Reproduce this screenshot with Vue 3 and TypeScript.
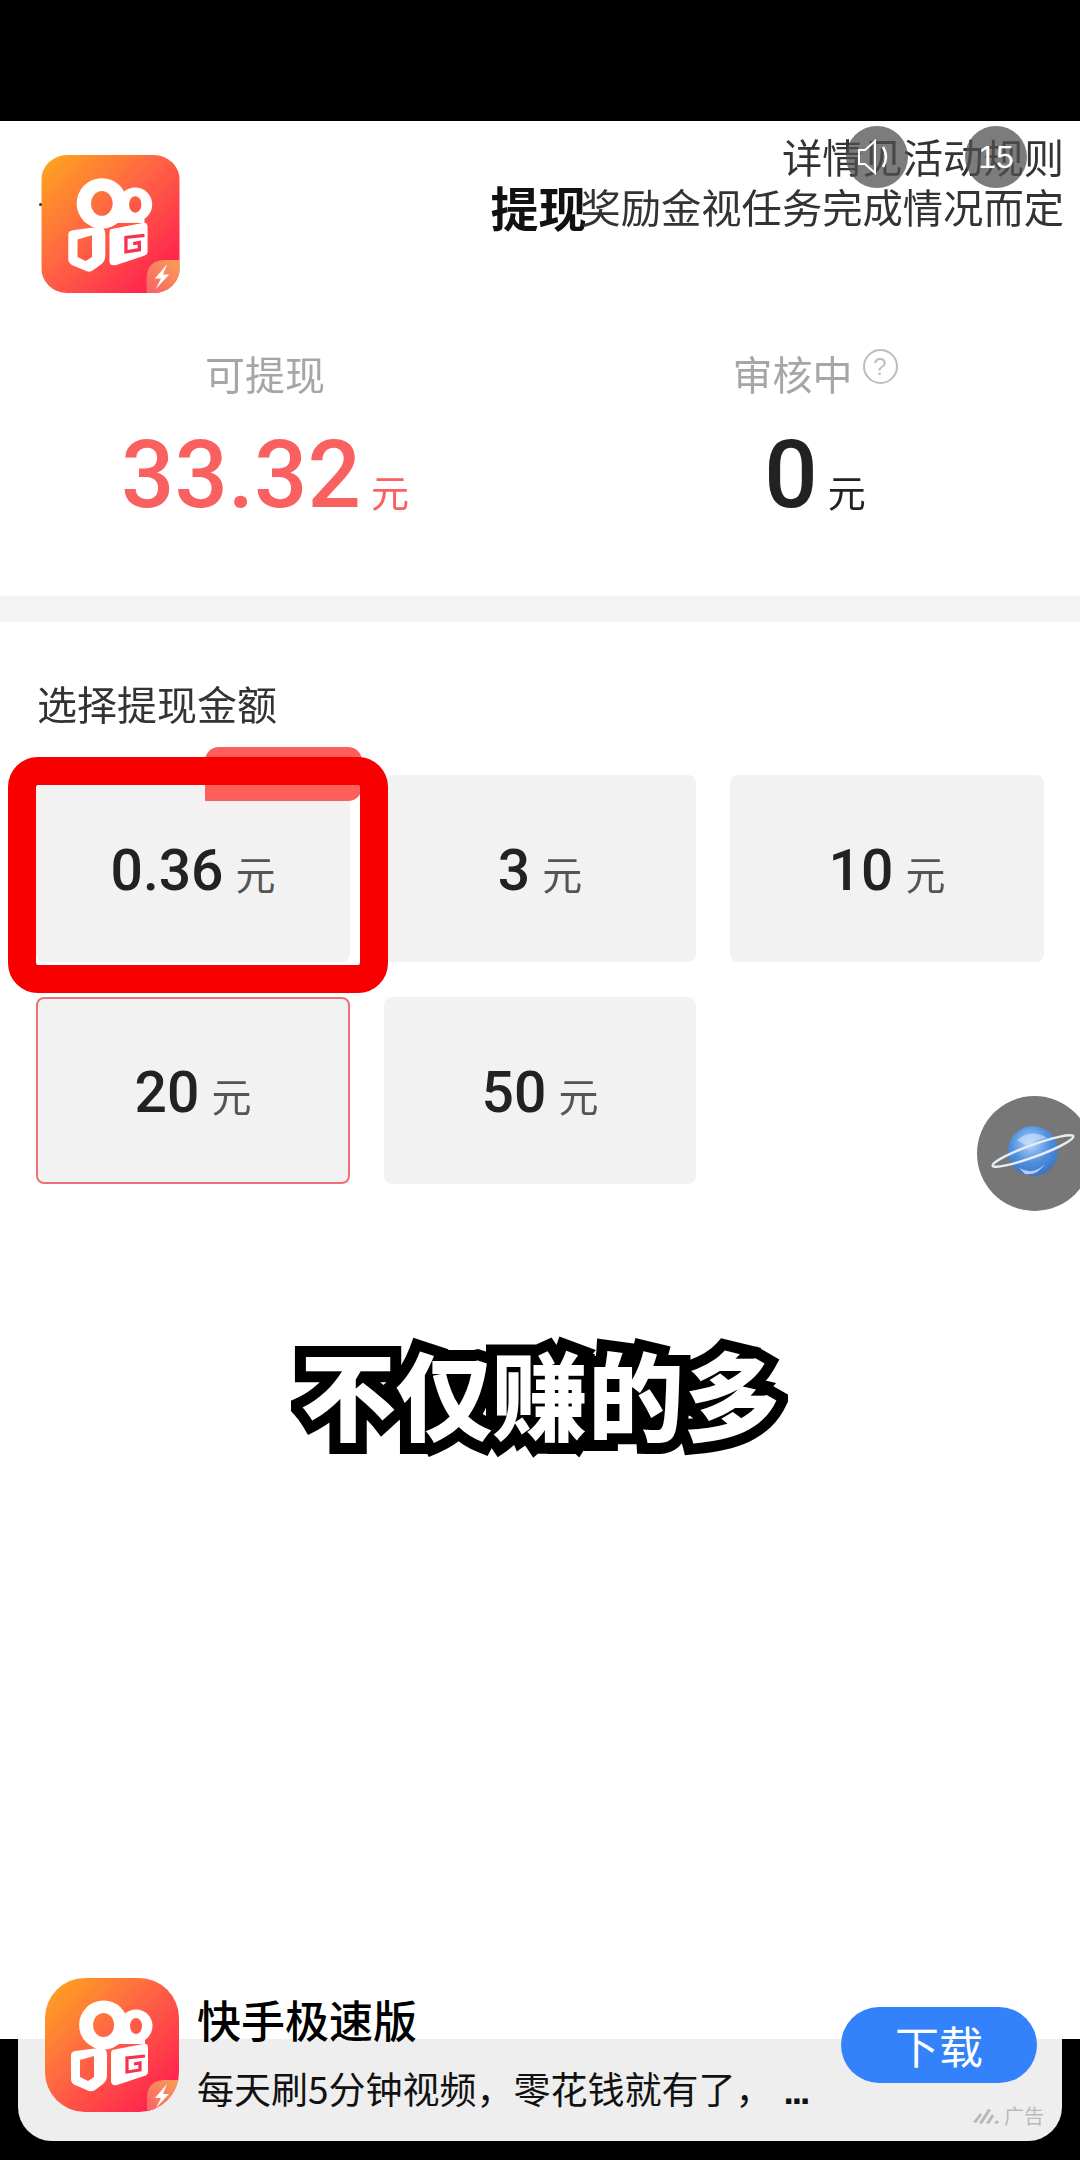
<script setup lang="ts">
interface Amount {
  value: string
  picked?: boolean
  outlined?: boolean
}

const amounts: Amount[] = [
  { value: '0.36', picked: true },
  { value: '3' },
  { value: '10' },
  { value: '20', outlined: true },
  { value: '50' },
]
</script>

<template>
  <div class="screen">
    <svg class="defs" width="0" height="0" aria-hidden="true">
      <defs>
        <linearGradient id="logoBg" gradientUnits="userSpaceOnUse" x1="0" y1="0" x2="134" y2="134">
          <stop offset="0" stop-color="#ffa91c" />
          <stop offset="0.45" stop-color="#ff6444" />
          <stop offset="1" stop-color="#ff1150" />
        </linearGradient>
        <linearGradient id="boltBg" x1="1" y1="0" x2="0" y2="1">
          <stop offset="0" stop-color="#f9a052" />
          <stop offset="1" stop-color="#f8606a" />
        </linearGradient>
        <radialGradient id="globe" cx="0.45" cy="0.35" r="0.7">
          <stop offset="0" stop-color="#b4d6fb" />
          <stop offset="0.55" stop-color="#4f8fe0" />
          <stop offset="1" stop-color="#3a6fc0" />
        </radialGradient>
        <symbol id="kwai" viewBox="0 0 134 134">
          <rect width="134" height="134" fill="url(#logoBg)" />
          <!-- camera reels -->
          <circle cx="58.600" cy="47" r="24.500" fill="#fff" />
          <circle cx="91" cy="48" r="16.500" fill="#fff" />
          <rect x="58" y="50" width="42" height="16" fill="#fff" />
          <ellipse cx="58.600" cy="47" rx="10.500" ry="12" fill="url(#logoBg)" />
          <ellipse cx="91" cy="48" rx="6" ry="8" fill="url(#logoBg)" />
          <!-- lens box -->
          <path
            fill="#fff"
            fill-rule="evenodd"
            d="M30 73l24-3q8-1 8 7v20q0 6-4 9l-8 6q-3 2-6 1l-14-6q-4-2-4-6v-24q0-3 4-4zM35 82v17l8 4 6-4v-21z"
          />
          <!-- camera body with the G cut -->
          <path fill="#fff" d="M67 72l31-6q5-1 5 4v24q0 3-4 4l-27 9q-6 1-6-4v-27q0-3 1-4z" />
          <path d="M100 78l-18 2v14l13-2v-7l-6 1" fill="none" stroke="#f9304f" stroke-width="3.200" />
          <path d="M102 134v-14q0-17 17-18h15v32z" fill="url(#boltBg)" />
          <path d="M122 106l-12 14h6l-5 10 13-14h-6z" fill="#fff" />
        </symbol>
      </defs>
    </svg>

    <div class="topbar"></div>

    <main class="page">
      <header class="head soft">
        <span class="back-dot"></span>
        <svg class="logo"><use href="#kwai" /></svg>
        <div class="head-text">
          <div class="rules">详情见活动规则</div>
          <div class="head-row">
            <strong class="head-title">提现</strong>
            <span class="rules">奖励金视任务完成情况而定</span>
          </div>
        </div>
      </header>

      <section class="stats soft">
        <div class="stat">
          <div class="stat-label">可提现</div>
          <div class="stat-value red">33.32<span class="stat-unit">元</span></div>
        </div>
        <div class="stat">
          <div class="stat-label">
            审核中
            <span class="help">?</span>
          </div>
          <div class="stat-value">0<span class="stat-unit">元</span></div>
        </div>
      </section>

      <div class="divider soft"></div>

      <h2 class="pick-title soft">选择提现金额</h2>
      <div class="grid soft">
        <div
          v-for="item in amounts"
          :key="item.value"
          class="tile"
          :class="{ outlined: item.outlined, picked: item.picked }"
        >
          <span class="tile-num">{{ item.value }}</span>
          <span class="tile-unit">元</span>
          <template v-if="item.picked">
            <span class="badge"></span>
            <span class="frame"></span>
          </template>
        </div>
      </div>

      <div class="caption soft">不仅赚的多</div>

      <!-- video overlay buttons -->
      <div class="round mute">
        <svg width="62" height="62" viewBox="0 0 62 62" fill="none" stroke="#fff" stroke-width="2">
          <path d="M13 24h6l10-9v32l-10-9h-6z" />
          <path d="M37 21q6 10 0 20" stroke-width="2.500" />
        </svg>
      </div>
      <div class="round count">15</div>

      <div class="planet">
        <svg width="115" height="115" viewBox="0 0 115 115">
          <circle cx="56" cy="55" r="25" fill="url(#globe)" />
          <path d="M40 44q14-12 30-2q-14 2-20 8z" fill="#cfe4ff" opacity="0.6" />
          <path d="M42 72q14 8 26-4q-8 12-20 10z" fill="#e6f1ff" opacity="0.7" />
          <ellipse
            cx="56"
            cy="55"
            rx="43"
            ry="6"
            transform="rotate(-20 56 55)"
            fill="none"
            stroke="#e8edf2"
            stroke-width="2.500"
          />
        </svg>
      </div>
    </main>

    <footer class="bottom">
      <div class="ad">
        <div class="ad-row">
          <svg class="ad-logo"><use href="#kwai" /></svg>
          <div class="ad-text">
            <div class="ad-name">快手极速版</div>
            <div class="ad-desc">每天刷5分钟视频，零花钱就有了，<span class="dots">...</span></div>
          </div>
          <button class="download" type="button">下载</button>
        </div>
        <div class="ad-tag">
          <svg width="28" height="18" viewBox="0 0 28 18" fill="#b9b9b9">
            <path d="M1 15l7-9 2 2-6 8zM7 16l9-14 3 1-9 14zM14 16l6-9 2 2-5 8zM22 16l3-3 2 2-2 2z" />
          </svg>
          广告
        </div>
      </div>
    </footer>
  </div>
</template>

<style scoped>
.screen {
  position: relative;
  width: 1080px;
  height: 2160px;
  display: flex;
  flex-direction: column;
  overflow: hidden;
  background: #000;
  font-family: "Noto Sans CJK SC", "Liberation Sans", sans-serif;
}
.defs {
  position: absolute;
}
.topbar {
  height: 121px;
  flex: none;
}

.page {
  position: relative;
  flex: 1;
  background: #fff;
}
/* the page is a compressed video frame, everything in it is a bit soft */
.soft {
  filter: blur(0.7px);
}

.head {
  position: relative;
  display: flex;
  justify-content: space-between;
  align-items: flex-start;
  padding: 0 16px 0 41px;
}
.back-dot {
  position: absolute;
  left: 39px;
  top: 82px;
  width: 3px;
  height: 3px;
  border-radius: 50%;
  background: #333;
}
.logo {
  width: 139px;
  height: 138px;
  margin-top: 34px;
  border-radius: 26px;
}
.head-text {
  display: flex;
  flex-direction: column;
  align-items: flex-end;
  padding-top: 12px;
}
.rules {
  font-size: 40.300px;
  line-height: 46px;
  color: #333;
  white-space: nowrap;
}
.head-row {
  display: flex;
  align-items: center;
  margin-top: 2px;
}
.head-title {
  margin-right: -6px;
  font-size: 48px;
  line-height: 50px;
  font-weight: 700;
  color: #111;
}

.stats {
  display: grid;
  grid-template-columns: 530px 530px;
  gap: 20px;
  margin-top: 55px;
  text-align: center;
}
.stat-label {
  display: flex;
  justify-content: center;
  gap: 10px;
  font-size: 40px;
  line-height: 50px;
  color: #a6a6a6;
}
.help {
  width: 31px;
  height: 31px;
  margin-top: 1px;
  border: 2px solid #bdbdbd;
  border-radius: 50%;
  font: 24px/31px "Liberation Sans", sans-serif;
  color: #bdbdbd;
}
.stat-value {
  margin-top: 22px;
  font-family: Roboto, "Noto Sans CJK SC", sans-serif;
  font-size: 94px;
  line-height: 110px;
  font-weight: 500;
  color: #222;
}
.stat-value.red {
  color: #f8615f;
}
.stat-unit {
  margin-left: 10px;
  font-family: "Noto Sans CJK SC", sans-serif;
  font-size: 38px;
  font-weight: 400;
}

.divider {
  height: 26px;
  margin-top: 50px;
  background: #f3f3f3;
}

.pick-title {
  margin: 56px 0 0 37px;
  font-size: 40px;
  line-height: 50px;
  font-weight: 400;
  color: #333;
}

.grid {
  display: grid;
  grid-template-columns: 314px 312px 314px;
  grid-auto-rows: 187px;
  gap: 35px 34px;
  margin: 47px 0 0 36px;
}
.tile {
  position: relative;
  display: flex;
  justify-content: center;
  align-items: baseline;
  gap: 12px;
  padding-top: 63px;
  border-radius: 8px;
  background: #f2f2f2;
  box-sizing: border-box;
}
.tile.picked {
  z-index: 1;
}
.tile.outlined {
  border: 2px solid #ee7078;
  padding-top: 61px;
}
.tile-num {
  font-family: Roboto, "Noto Sans CJK SC", sans-serif;
  font-size: 57px;
  line-height: 66px;
  font-weight: 500;
  color: #222;
}
.tile-unit {
  font-size: 40px;
  color: #555;
}
.badge {
  position: absolute;
  left: 169px;
  top: -28px;
  width: 157px;
  height: 54px;
  border-radius: 14px 14px 14px 0;
  background: #ff5f5a;
}
.frame {
  position: absolute;
  left: -28px;
  right: -38px;
  top: -18px;
  bottom: -31px;
  border: 28px solid #f90000;
  border-radius: 30px;
}

.caption {
  margin-top: 143px;
  text-align: center;
  font-size: 96px;
  line-height: 130px;
  font-weight: 900;
  color: #fff;
  -webkit-text-stroke: 22px #000;
  stroke-linejoin: round;
  paint-order: stroke fill;
}

.round {
  position: absolute;
  top: 5px;
  width: 62px;
  height: 62px;
  border-radius: 50%;
  background: rgba(80, 80, 80, 0.75);
  color: #fff;
  text-align: center;
}
.mute {
  left: 846px;
}
.count {
  left: 965px;
  font: 32px/62px "Liberation Sans", sans-serif;
}

.planet {
  position: absolute;
  left: 977px;
  top: 975px;
  width: 115px;
  height: 115px;
  border-radius: 50%;
  background: #777;
}

.bottom {
  position: relative;
  height: 121px;
  flex: none;
  box-sizing: border-box;
  padding: 0 18px 19px;
}
.ad {
  position: relative;
  height: 102px;
  padding-left: 27px;
  border-radius: 0 0 34px 34px;
  background: #eee;
}
.ad-row {
  display: flex;
  align-items: flex-start;
  gap: 18px;
  padding-right: 25px;
  transform: translateY(-61px);
}
.ad-logo {
  width: 134px;
  height: 134px;
  flex: none;
  border-radius: 40px;
}
.ad-text {
  padding-top: 16px;
}
.ad-name {
  font-size: 44px;
  line-height: 50px;
  font-weight: 500;
  color: #000;
}
.ad-desc {
  margin-top: 22px;
  font-size: 37px;
  line-height: 44px;
  color: #111;
  white-space: nowrap;
}
.dots {
  margin-left: 11px;
  font-family: "Liberation Sans", sans-serif;
  font-weight: 700;
  letter-spacing: -2px;
}
.download {
  width: 196px;
  height: 76px;
  margin: 29px 0 0 auto;
  padding: 0;
  border: 0;
  border-radius: 38px;
  background: #3381fb;
  color: #fff;
  font-family: inherit;
  font-size: 44px;
  line-height: 76px;
}
.ad-tag {
  position: absolute;
  right: 18px;
  bottom: 13px;
  display: flex;
  align-items: center;
  gap: 4px;
  font-size: 20px;
  line-height: 24px;
  color: #bbb;
}
</style>
